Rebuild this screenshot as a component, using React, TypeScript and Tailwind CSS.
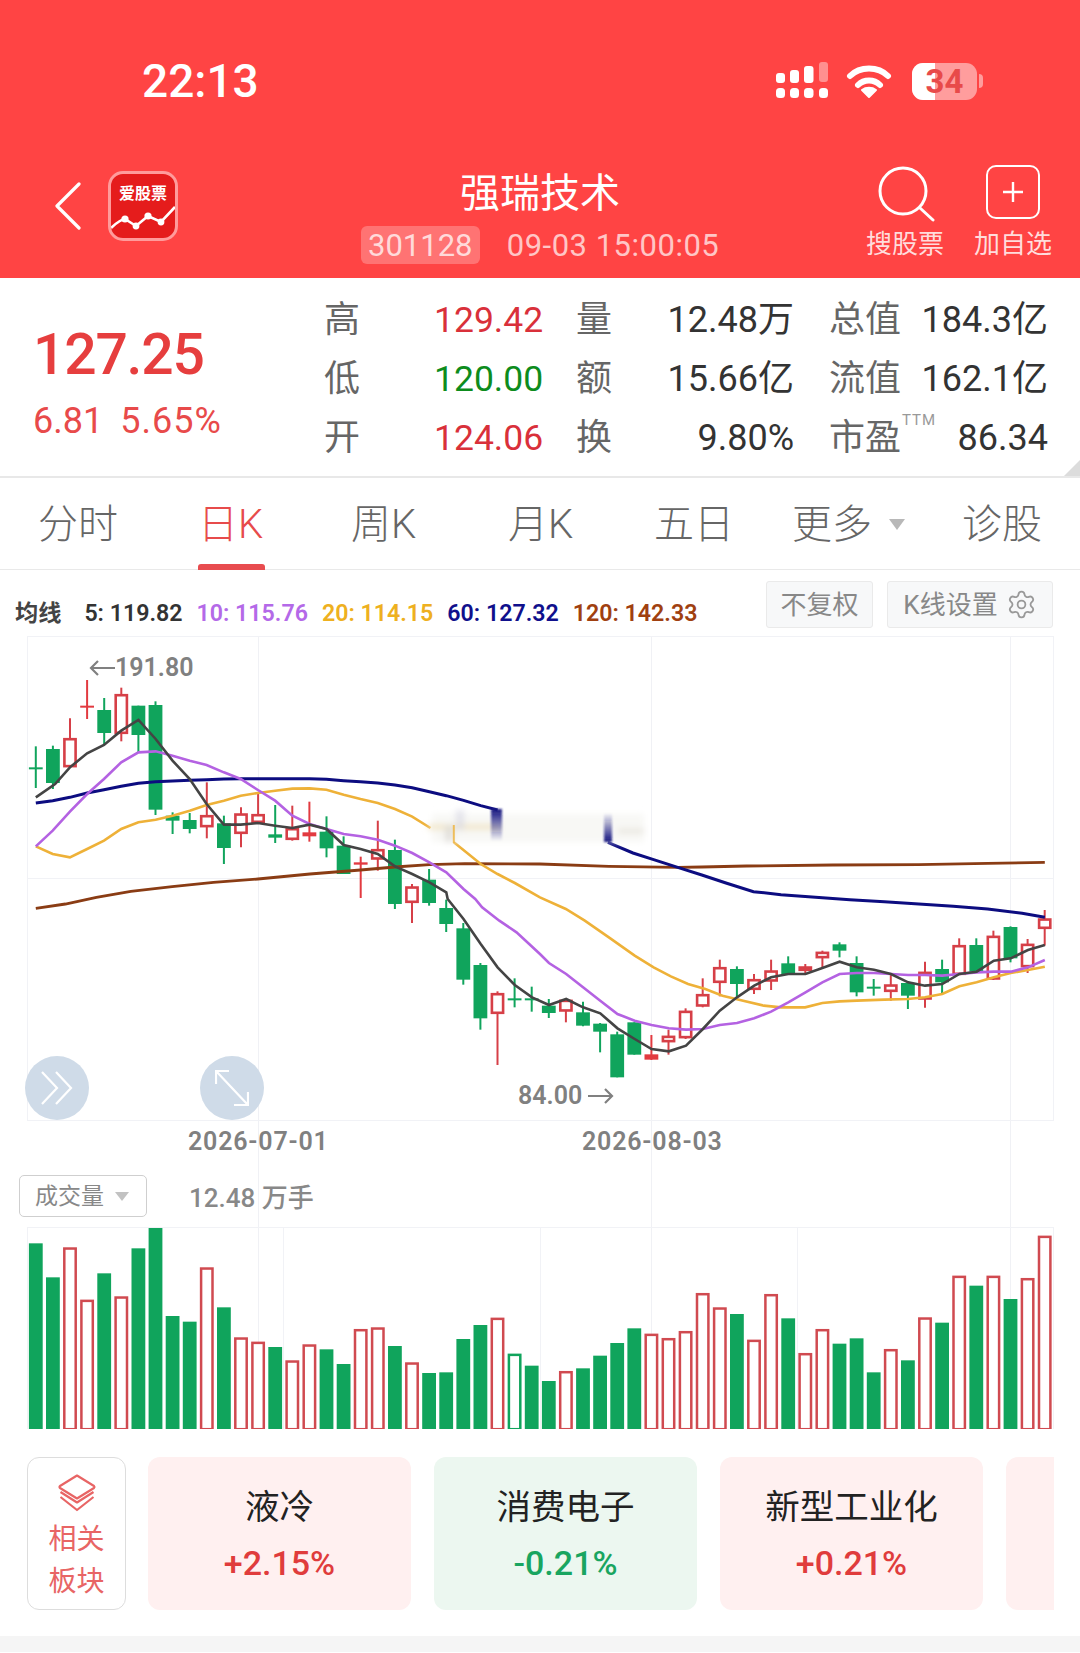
import { Settings } from "lucide-react";

type C = [string, number, number, number, number];
const z3: C[] = [
  ["g",352,415,420,477],["g",350,360,462,480],["r",268,327,415,415],["d",153,230,235,270],["g",207,243,312,345],
  ["r",176,195,315,337],["g",230,230,318,370],["g",217,228,542,558],["g",550,560,575,615],["g",552,573,600,613],
  ["r",460,558,595,628],["g",560,583,657,705],["r",535,553,615,655],["r",495,555,582,585],["g",528,616,626,642],
  ["r",530,597,633,635],["d",518,610,622,638],["g",562,608,658,685],["g",622,650,735,735],["d",683,700,707,807],
  ["r",575,660,692,725],["g",632,663,825,840],["r",765,772,822,882],["g",720,752,822,830],["g",812,837,885,909],
];
const z5: C[] = [
  ["g",72,88,242,257],["g",192,198,358,392],["r",277,282,345,498],["g",238,298,304,325],["g",263,298,304,338],
];
const z6: C[] = [
  ["g",300,320,342,357],["r",298,302,338,370],["g",308,340,380,382],["g",372,374,398,460],["g",398,406,535,535],
  ["g",370,370,467,467],["d",408,466,482,483],["r",392,410,430,467],["r",328,335,418,420],["r",238,285,323,325],
  ["r",182,204,252,292],["g",202,210,255,295],["r",225,240,273,285],["r",182,214,248,273],["g",172,193,228,228],
  ["r",195,202,216,225],["r",155,158,178,205],["g",130,136,155,175],["g",172,192,280,292],["g",240,263,268,290],
  ["r",228,256,279,305],["g",250,252,290,330],["r",188,218,302,326],["g",182,210,250,285],["r",118,138,228,228],
  ["g",118,138,218,222],["r",95,110,242,243],["g",82,84,178,190],["r",120,134,205,222],["r",33,58,90,140],
];
const conv = (a: C[], top: number): C[] => a.map(([k, w, b, c, d]) => [k, top + w / 3, top + b / 3, top + c / 3, top + d / 3]);
const candles: C[] = [...conv(z3, 630), ...conv(z5, 900), ...conv(z6, 900)];
const cx = (i: number) => 35.8 + 17.1 * i;

const vol: [string, number][] = ([
  ["g",163],["g",265],["r",175],["r",332],["g",253],["r",322],["g",178],["g",117],["g",381],["g",398],
  ["r",235],["g",355],["r",445],["r",458],["g",474],["r",514],["r",466],["g",481],["g",525],["r",420],
  ["r",415],["g",471],["r",520],["g",552],["g",550],["g",450],["g",408],["r",386],["h",494],["g",530],
  ["g",576],["r",546],["g",538],["g",500],["g",462],["g",418],["r",434],["r",447],["r",426],["r",312],
  ["r",355],["g",375],["r",452],["r",315],["g",388],["r",492],["r",420],["g",464],["g",448],["g",550],
  ["r",480],["g",514],["r",385],["g",401],["r",260],["g",290],["r",260],["g",330],["r",267],["r",140],
] as [string, number][]).map(([k, z]) => [k, 1190 + z / 3]);

type P = number[];
const a3 = (l: P[]) => l.map(([x, y]) => `${x / 2.904},${630 + y / 3}`);
const a4 = (l: P[]) => l.map(([x, y]) => `${540 + x / 2.904},${630 + y / 3}`);
const a5 = (l: P[]) => l.map(([x, y]) => `${x / 2.904},${900 + y / 3}`);
const a6 = (l: P[]) => l.map(([x, y]) => `${540 + x / 2.904},${900 + y / 3}`);

const ma5 = [
  ...a3([[104,505],[160,465],[203,415],[253,373],[302,348],[352,305],[402,273],[452,330],[501,395],[551,450],[600,525],[650,587],[699,587],[749,582],[799,590],[849,597],[899,587],[948,600],[998,648],[1047,660],[1097,675],[1147,712],[1197,735],[1247,760],[1296,790]]),
  ...a5([[1300,0],[1346,60],[1396,135],[1445,205],[1495,258],[1545,295]]),
  ...a6([[26,318],[76,300],[125,325],[175,343],[225,388],[275,420],[324,450],[374,457],[424,440],[473,390],[522,335],[572,295],[622,260],[671,235],[721,225],[771,225],[820,207],[870,188],[920,205],[970,212],[1019,225],[1069,250],[1118,260],[1168,255],[1218,225],[1268,218],[1318,185],[1367,178],[1417,153],[1466,138]]),
].join(" ");
const ma10 = [
  ...a3([[104,652],[153,605],[203,548],[253,495],[302,450],[352,400],[402,370],[452,367],[501,380],[551,395],[600,408],[650,430],[699,450],[749,483],[799,515],[849,560],[899,585],[948,600],[998,615],[1047,622],[1097,632],[1147,650],[1197,672],[1247,700],[1296,730],[1346,780]]),
  ...a5([[1380,0],[1400,25],[1450,65],[1500,100],[1568,165]]),
  ...a6([[26,192],[76,225],[125,265],[175,305],[225,345],[275,365],[324,378],[374,388],[424,392],[473,390],[522,378],[572,372],[622,358],[671,338],[721,310],[771,280],[820,250],[870,225],[920,222],[970,222],[1019,225],[1069,228],[1118,228],[1168,230],[1218,225],[1268,220],[1318,218],[1367,218],[1417,205],[1466,183]]),
].join(" ");
const ma20a = a3([[104,652],[153,675],[203,685],[253,660],[302,635],[352,600],[402,580],[452,572],[501,560],[551,545],[600,528],[650,515],[699,500],[749,492],[799,485],[849,479],[899,478],[948,482],[998,497],[1047,510],[1097,522],[1147,540],[1197,563],[1250,597]]).join(" ");
const ma20b = [
  ...a3([[1318,640],[1396,705],[1445,735],[1495,762],[1568,805]]),
  ...a6([[75,30],[130,65],[200,115],[275,170],[330,205],[380,232],[430,255],[480,270],[530,290],[590,305],[650,320],[700,325],[770,325],[820,312],[870,307],[920,305],[1000,302],[1069,300],[1118,295],[1168,285],[1218,262],[1268,250],[1318,235],[1367,222],[1417,213],[1466,203]]),
].join(" ");
const ma60a = a3([[104,522],[153,515],[203,505],[253,492],[302,482],[352,472],[402,463],[452,458],[501,456],[551,454],[600,452],[650,450],[699,449],[749,449],[899,449],[948,451],[998,455],[1047,458],[1097,462],[1147,468],[1197,476],[1247,488],[1296,500],[1346,514],[1396,530],[1445,543]]).join(" ");
const ma60b = a4([[197,640],[270,672],[330,692],[400,715],[470,738],[540,762],[620,788],[700,797],[800,805],[900,812],[1000,818],[1100,825],[1200,832],[1300,840],[1400,853],[1466,865]]).join(" ");
const ma120 = [
  ...a3([[104,838],[190,825],[280,805],[380,787],[500,773],[620,760],[749,750],[900,735],[1047,723],[1147,714],[1247,707],[1350,704],[1568,705]]),
  ...a4([[200,712],[400,715],[470,714],[600,711],[850,708],[1100,707],[1300,703],[1466,700]]),
].join(" ");

const RED = "#d63f47";
const GREEN = "#10a45c";
const GRID = "#f1f2f6";

function Legend({ cls, children }: { cls: string; children: string }) {
  return <span className={`${cls} whitespace-pre`}>{children}</span>;
}

function Tab({ w, children, active }: { w: string; children: React.ReactNode; active?: boolean }) {
  return (
    <div className={`${w} relative flex h-full shrink-0 items-center pt-[2px] ${active ? "text-[#e74b4b]" : "text-[#666]"}`}>
      {children}
      {active && <span className="absolute bottom-[-1px] left-0 h-[6px] w-[67px] rounded-t-[3px] bg-[#e84c4f]" />}
    </div>
  );
}

function Card({ name, pct, cls, bg }: { name: string; pct: string; cls: string; bg: string }) {
  return (
    <div className={`${bg} flex h-[153px] w-[263px] shrink-0 flex-col items-center rounded-[12px] pt-[26px]`}>
      <div className="text-[34.5px] leading-[48px] text-[#222]">{name}</div>
      <div className={`${cls} mt-[8px] text-[34px] font-medium leading-[48px]`}>{pct}</div>
    </div>
  );
}

const VAL = "text-[35.5px]";
const RVAL = "whitespace-nowrap text-right text-[36px]";
const LBL = "whitespace-nowrap text-[36px] text-[#666]";

export default function App() {
  return (
    <div className="h-[1653px] w-[1080px] overflow-hidden bg-white font-[family-name:Roboto,'Noto_Sans_CJK_SC',sans-serif]">
      {/* Header */}
      <header className="h-[278px] bg-[#ff4444] text-white">
        <div className="flex h-[111px] items-end">
          <div className="flex h-[60px] w-full items-center justify-between pl-[142px] pr-[97px]">
            <span className="text-[46px] font-medium leading-none">22:13</span>
            <div className="flex items-center">
              <svg width="54" height="38" viewBox="0 0 54 38" fill="#fff">
                <rect x="1" y="11" width="9" height="10" rx="3" />
                <rect x="15" y="8" width="9" height="13" rx="3" />
                <rect x="29" y="4" width="9.5" height="17" rx="3" />
                <rect x="44" y="0" width="9" height="20" rx="3" fill="#ff9090" />
                <rect x="1" y="26" width="9" height="10" rx="3.5" />
                <rect x="15" y="26" width="9" height="10" rx="3.5" />
                <rect x="29" y="26" width="9.5" height="10" rx="3.5" />
                <rect x="44" y="26" width="9" height="10" rx="3.5" />
              </svg>
              <svg width="46" height="36" viewBox="0 0 46 36" className="ml-[17px]" fill="none" stroke="#fff" strokeWidth="6" strokeLinecap="round">
                <path d="M4 13 C14 3 32 3 42 13" />
                <path d="M12 22 C18 16 28 16 34 22" />
                <path d="M23 34 L16 27 C20 24 26 24 30 27 Z" fill="#fff" stroke="#fff" strokeWidth="2" strokeLinejoin="round" />
              </svg>
              <div className="relative ml-[20px] flex h-[37px] w-[65px] items-center justify-center overflow-hidden rounded-[11px] bg-[#ff9d9d]">
                <span className="absolute inset-y-0 left-0 w-[23px] bg-white" />
                <span className="relative text-[33px] font-bold leading-none text-[#e84a4a]">34</span>
              </div>
              <span className="ml-[2px] h-[14px] w-[4px] rounded-r-full bg-[#ff9d9d]" />
            </div>
          </div>
        </div>
        <div className="mt-[55px] grid h-[112px] grid-cols-[1fr_auto_1fr]">
          <div className="flex items-start pl-[54px]">
            <svg width="28" height="48" viewBox="0 0 28 48" className="mt-[16px]" fill="none" stroke="#fff" strokeWidth="3.2" strokeLinecap="round" strokeLinejoin="round">
              <path d="M25 2 L3 24 L25 46" />
            </svg>
            <div className="relative ml-[26px] mt-[5px] h-[70px] w-[70px] overflow-hidden rounded-[15px] border-[3px] border-[#ff9b9b] bg-[#e51c1c]">
              <div className="pt-[10px] text-center text-[16px] font-bold leading-[20px] text-white">爱股票</div>
              <svg width="64" height="64" viewBox="0 0 64 64" className="absolute left-0 top-0" fill="#fff">
                <path d="M0 54 C6 48 12 45 14 45 L25 52 L37 42 L50 48 L64 33" fill="none" stroke="#fff" strokeWidth="2.6" />
                <circle cx="14" cy="45" r="3.6" />
                <circle cx="25" cy="52" r="3.4" />
                <circle cx="37" cy="42" r="3.6" />
                <circle cx="50" cy="48" r="3.4" />
              </svg>
            </div>
          </div>
          <div className="flex flex-col items-center pt-[3px]">
            <div className="text-[40px] leading-[50px]">强瑞技术</div>
            <div className="mt-[7px] flex h-[38px] items-center">
              <span className="flex h-[38px] w-[119px] items-center justify-center rounded-[6px] bg-white/25 text-[31px] leading-none text-[#ffdada]">301128</span>
              <span className="ml-[27px] whitespace-nowrap text-[31px] leading-none tracking-[0.5px] text-[#ffc6c6]">09-03 15:00:05</span>
            </div>
          </div>
          <div className="flex justify-end pr-[28px]">
            <div className="flex w-[78px] flex-col items-center">
              <svg width="62" height="56" viewBox="0 0 62 56" fill="none" stroke="#fff" strokeWidth="3">
                <circle cx="29" cy="25" r="23" />
                <path d="M46 42 L59 54" strokeLinecap="round" />
              </svg>
              <span className="mt-[7px] whitespace-nowrap text-[26px] leading-[30px] text-[#ffdcdc]">搜股票</span>
            </div>
            <div className="ml-[30px] flex w-[78px] flex-col items-center">
              <div className="-mt-[1px] flex h-[54px] w-[54px] items-center justify-center rounded-[10px] border-[2.5px] border-white">
                <svg width="24" height="24" viewBox="0 0 24 24" fill="none" stroke="#fff" strokeWidth="2.4">
                  <path d="M12 2 V22 M2 12 H22" />
                </svg>
              </div>
              <span className="mt-[10px] whitespace-nowrap text-[26px] leading-[30px] text-[#ffdcdc]">加自选</span>
            </div>
          </div>
        </div>
      </header>

      {/* Quote */}
      <section className="relative flex h-[200px] border-b-2 border-[#e8e8e8]">
        <div className="w-[324px] pl-[33px] pt-[43px]">
          <div className="text-[57px] font-medium leading-[68px] tracking-[-1.2px] text-[#e63e3e]">127.25</div>
          <div className="mt-[12px] flex text-[36px] leading-[40px] text-[#e84a4a]">
            <span>6.81</span>
            <span className="ml-[17px] tracking-[1px]">5.65%</span>
          </div>
        </div>
        <div className="grid grid-cols-[110px_142px_63px_155px_35px_74px_145px] grid-rows-[59px_59px_59px] content-start pt-[13px] leading-[59px] text-[#333]">
          <span className={LBL}>高</span>
          <span className={`${VAL} text-[#d9303a]`}>129.42</span>
          <span className={LBL}>量</span>
          <span className={RVAL}>12.48万</span>
          <span />
          <span className={LBL}>总值</span>
          <span className={RVAL}>184.3亿</span>
          <span className={LBL}>低</span>
          <span className={`${VAL} text-[#0d8c1d]`}>120.00</span>
          <span className={LBL}>额</span>
          <span className={RVAL}>15.66亿</span>
          <span />
          <span className={LBL}>流值</span>
          <span className={RVAL}>162.1亿</span>
          <span className={LBL}>开</span>
          <span className={`${VAL} text-[#d9303a]`}>124.06</span>
          <span className={LBL}>换</span>
          <span className={RVAL}>9.80%</span>
          <span />
          <span className={`relative ${LBL}`}>
            市盈
            <span className="absolute left-[73px] top-[-9px] text-[15px] leading-[40px] tracking-[1px] text-[#999]">TTM</span>
          </span>
          <span className={RVAL}>86.34</span>
        </div>
        <svg width="16" height="16" viewBox="0 0 16 16" className="absolute bottom-0 right-0" fill="#dcdcdc">
          <path d="M16 0 V16 H0 Z" />
        </svg>
      </section>

      {/* Tabs */}
      <nav className="flex h-[92px] border-b border-[#e9e9e9] pl-[38px] text-[40px] font-light leading-none">
        <Tab w="w-[160px]">分时</Tab>
        <Tab w="w-[153px]" active>日K</Tab>
        <Tab w="w-[157px]">周K</Tab>
        <Tab w="w-[146px]">月K</Tab>
        <Tab w="w-[138px]">五日</Tab>
        <Tab w="w-[170px]">
          更多
          <svg width="16" height="11" viewBox="0 0 16 11" className="ml-[17px]" fill="#b8b8b8">
            <path d="M0 0 H16 L8 11 Z" />
          </svg>
        </Tab>
        <Tab w="w-[82px]">诊股</Tab>
      </nav>

      {/* MA legend */}
      <div className="relative flex h-[66px] items-start pl-[15px] pr-[27px] text-[23.2px] font-semibold leading-none">
        <div className="flex h-[66px] items-center gap-[14px] pt-[22px]">
          <span className="text-[#444]">均线</span>
          <Legend cls="ml-[9px] text-[#333]">5: 119.82</Legend>
          <Legend cls="text-[#b469e8]">10: 115.76</Legend>
          <Legend cls="text-[#eeb020]">20: 114.15</Legend>
          <Legend cls="text-[#10108c]">60: 127.32</Legend>
          <Legend cls="text-[#a04010]">120: 142.33</Legend>
        </div>
        <div className="ml-auto mt-[11px] flex gap-[14px] text-[26px] font-normal text-[#888]">
          <span className="flex h-[47px] w-[107px] items-center justify-center rounded-[3px] border border-[#eaeaea] bg-[#f7f8f9]">不复权</span>
          <span className="flex h-[47px] w-[166px] items-center justify-center gap-[8px] rounded-[3px] border border-[#eaeaea] bg-[#f7f8f9]">
            K线设置
            <Settings size={31} strokeWidth={1.4} color="#999" />
          </span>
        </div>
      </div>

      {/* Charts */}
      <div className="relative">
        <span className="absolute left-[258px] top-0 h-[792px] w-px bg-[#f0f1f5]" />
        <span className="absolute left-[651px] top-0 h-[792px] w-px bg-[#f0f1f5]" />
        <span className="absolute left-[1010px] top-0 h-[792px] w-px bg-[#f0f1f5]" />

        <div className="relative h-[528px]">
          <svg width="1080" height="528" viewBox="0 637 1080 528" className="block" fill="none">
            <defs>
              <linearGradient id="fadeDown" x1="0" y1="0" x2="0" y2="1">
                <stop offset="0" stopColor="#14147f" />
                <stop offset="1" stopColor="#14147f" stopOpacity="0" />
              </linearGradient>
              <linearGradient id="fadeUp" x1="0" y1="0" x2="0" y2="1">
                <stop offset="0" stopColor="#14147f" stopOpacity="0" />
                <stop offset="1" stopColor="#14147f" />
              </linearGradient>
              <filter id="smear" x="-20%" y="-60%" width="140%" height="220%">
                <feGaussianBlur stdDeviation="3" />
              </filter>
              <filter id="smear2" x="-60%" y="-20%" width="220%" height="140%">
                <feGaussianBlur stdDeviation="1.2" />
              </filter>
            </defs>
            <path d="M27.5 637 V1122 M1053.5 637 V1122 M27.5 637.5 H1054 M27.5 879.5 H1054 M27.5 1121.5 H1054" stroke={GRID} />
            {candles.map(([k, wt, bt, bb, wb], i) => {
              const x = cx(i);
              const color = k === "g" ? GREEN : k === "d" ? "#e23a40" : RED;
              return (
                <g key={i}>
                  <path d={`M${x} ${wt} V${wb}`} stroke={color} strokeWidth="2" />
                  {k === "r" ? (
                    <rect x={x - 5.6} y={bt + 1.2} width="11.2" height={Math.max(bb - bt - 2.4, 2)} fill="#fff" stroke={color} strokeWidth="2.6" />
                  ) : (
                    <rect x={x - 6.9} y={bt} width="13.8" height={Math.max(bb - bt, 2)} fill={color} />
                  )}
                </g>
              );
            })}
            <polyline points={ma120} stroke="#8a3c14" strokeWidth="2.8" />
            <polyline points={ma60a} stroke="#0c0c80" strokeWidth="3" />
            <polyline points={ma60b} stroke="#0c0c80" strokeWidth="3" />
            <polyline points={ma20a} stroke="#eeb138" strokeWidth="2.6" />
            <polyline points={ma20b} stroke="#eeb138" strokeWidth="2.6" />
            <polyline points={ma10} stroke="#b462e2" strokeWidth="2.6" />
            <polyline points={ma5} stroke="#444" strokeWidth="2.6" />
            {/* smudged patch */}
            <g filter="url(#smear)">
              <rect x="432" y="815" width="212" height="28" fill="#f6f5f2" opacity="0.75" />
              <rect x="428" y="826" width="72" height="4" fill="#ecd9a8" opacity="0.8" />
              <rect x="445" y="826" width="8" height="17" fill="#d8d6d0" opacity="0.7" />
              <rect x="456" y="811" width="8" height="20" fill="#d8d8e4" opacity="0.7" />
              <rect x="618" y="830" width="26" height="4" fill="#dedad0" opacity="0.7" />
            </g>
            <rect x="491" y="810" width="11" height="32" fill="url(#fadeDown)" filter="url(#smear2)" />
            <rect x="604" y="814" width="8" height="29" fill="url(#fadeUp)" filter="url(#smear2)" />
            <path d="M453.8 826 V844" stroke="#eeb138" strokeWidth="2" opacity="0.8" />
          </svg>

          <div className="absolute left-[89px] top-[19px] flex items-center text-[25px] font-semibold leading-none text-[#808080]">
            <svg width="26" height="18" viewBox="0 0 26 18" fill="none" stroke="#808080" strokeWidth="2.2">
              <path d="M26 9 H2 M9 2 L2 9 L9 16" />
            </svg>
            191.80
          </div>
          <div className="absolute left-[518px] top-[447px] flex items-center gap-[6px] text-[25px] font-semibold leading-none text-[#808080]">
            84.00
            <svg width="26" height="18" viewBox="0 0 26 18" fill="none" stroke="#808080" strokeWidth="2.2">
              <path d="M0 9 H24 M17 2 L24 9 L17 16" />
            </svg>
          </div>
          <div className="absolute left-[25px] top-[420px] flex h-[64px] w-[64px] items-center justify-center rounded-full bg-[#cfdbe8]">
            <svg width="34" height="36" viewBox="0 0 34 36" fill="none" stroke="#fff" strokeWidth="2.2">
              <path d="M2 2 L17 18 L2 34 M16 2 L31 18 L16 34" />
            </svg>
          </div>
          <div className="absolute left-[200px] top-[420px] flex h-[64px] w-[64px] items-center justify-center rounded-full bg-[#cfdbe8]">
            <svg width="34" height="36" viewBox="0 0 34 36" fill="none" stroke="#fff" strokeWidth="2.2">
              <path d="M1 14 V1 H14 M1 1 L33 35 M33 22 V35 H19" />
            </svg>
          </div>
          <span className="absolute left-[188px] top-[493px] text-[25px] font-semibold leading-none tracking-[0.8px] text-[#808080]">2026-07-01</span>
          <span className="absolute left-[582px] top-[493px] text-[25px] font-semibold leading-none tracking-[0.8px] text-[#808080]">2026-08-03</span>
        </div>

        <div className="relative flex h-[63px] items-start pl-[19px] pt-[11px]">
          <div className="flex h-[42px] w-[128px] items-center rounded-[5px] border border-[#cfcfcf] bg-white pl-[15px] text-[23px] leading-none text-[#888]">
            成交量
            <svg width="14" height="9" viewBox="0 0 14 9" className="ml-[11px]" fill="#c2c2c2">
              <path d="M0 0 H14 L7 9 Z" />
            </svg>
          </div>
          <span className="ml-[42px] mt-[10px] text-[26px] font-medium leading-none text-[#888]">12.48 万手</span>
        </div>

        <svg width="1080" height="202" viewBox="0 1228 1080 202" className="relative block" fill="none">
          <path d="M27.5 1228.5 H1054 M27.5 1228 V1430 M1053.5 1228 V1430 M283.5 1228 V1430 M540.5 1228 V1430 M797.5 1228 V1430" stroke={GRID} />
          {vol.map(([k, y], i) => {
            const x = cx(i);
            if (k === "g") return <rect key={i} x={x - 6.9} y={y} width="13.8" height={1430 - y} fill={GREEN} />;
            const color = k === "h" ? GREEN : "#d04a50";
            return <rect key={i} x={x - 5.7} y={y + 1.2} width="11.4" height={1429 - y} fill="#fff" stroke={color} strokeWidth="2.5" />;
          })}
        </svg>
      </div>

      {/* Related sectors */}
      <div className="mx-[27px] flex h-[207px] w-[1027px] gap-[22px] overflow-hidden pt-[28px]">
        <div className="flex h-[153px] w-[99px] shrink-0 flex-col items-center rounded-[12px] border border-[#dddddd] pt-[16px] text-[28px] leading-[42px] text-[#e86565]">
          <svg width="40" height="38" viewBox="0 0 40 38" fill="none" stroke="#e86565" strokeWidth="2.2" strokeLinejoin="round">
            <path d="M20 1.5 L37 12 Q38 13 37 14 L20 24.5 L3 14 Q2 13 3 12 Z" />
            <path d="M3.5 18 L20 28.5 L36.5 18" />
            <path d="M3.5 23 L20 36 L36.5 23" />
          </svg>
          <div className="mt-[7px]">相关</div>
          <div>板块</div>
        </div>
        <div className="flex gap-[23px]">
          <Card name="液冷" pct="+2.15%" cls="text-[#e03c3c]" bg="bg-[#fff0f0]" />
          <Card name="消费电子" pct="-0.21%" cls="text-[#19a560]" bg="bg-[#ecf7f0]" />
          <Card name="新型工业化" pct="+0.21%" cls="text-[#e03c3c]" bg="bg-[#fff0f0]" />
          <div className="h-[153px] w-[100px] shrink-0 rounded-[12px] bg-[#fff0f0]" />
        </div>
      </div>
      <div className="h-[16px] bg-[#f5f5f5]" />
    </div>
  );
}
